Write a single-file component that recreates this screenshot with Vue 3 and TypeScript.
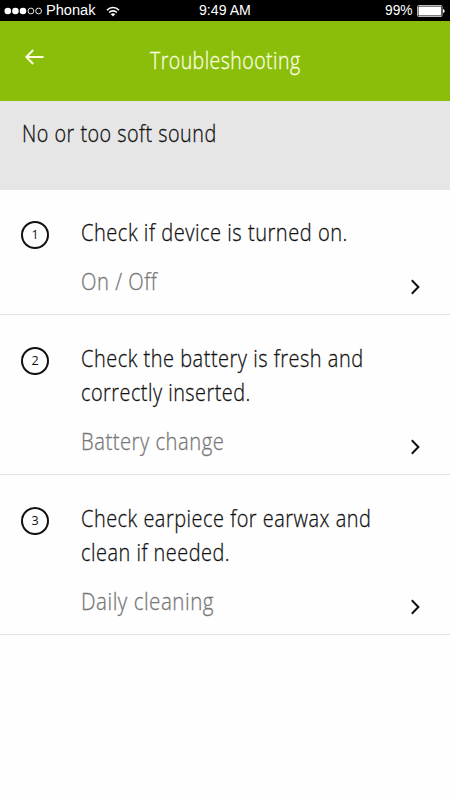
<script setup lang="ts">
import type { Directive } from 'vue'

interface Line { text: string; width: number }
interface Step { lines: Line[]; link: Line }

// Condenses a line of text to the given width in pixels.
const vFit: Directive<HTMLElement, number> = {
  mounted(el, binding) {
    el.style.transform = `scaleX(${binding.value / el.offsetWidth})`
  },
}

const steps: Step[] = [
  {
    lines: [{ text: 'Check if device is turned on.', width: 266.5 }],
    link: { text: 'On / Off', width: 76.5 },
  },
  {
    lines: [
      { text: 'Check the battery is fresh and', width: 283 },
      { text: 'correctly inserted.', width: 169.5 },
    ],
    link: { text: 'Battery change', width: 143.5 },
  },
  {
    lines: [
      { text: 'Check earpiece for earwax and', width: 290 },
      { text: 'clean if needed.', width: 149 },
    ],
    link: { text: 'Daily cleaning', width: 133 },
  },
]
</script>

<template>
  <main class="screen">
    <div class="status">
      <div class="carrier">
        <svg class="signal" width="38" height="8" viewBox="0 0 38 8">
          <circle cx="3.8" cy="4" r="3.3" fill="#fff" />
          <circle cx="11.4" cy="4" r="3.3" fill="#fff" />
          <circle cx="19" cy="4" r="3.3" fill="#fff" />
          <circle cx="26.9" cy="4" r="2.9" fill="none" stroke="#fff" stroke-width=".9" />
          <circle cx="34.6" cy="4" r="2.9" fill="none" stroke="#fff" stroke-width=".9" />
        </svg>
        <span v-fit="49" class="status-text">Phonak</span>
      </div>
      <svg class="wifi" width="14" height="11" viewBox="0 0 14 11">
        <path d="M1 4.2C4.4.6 9.6.6 13 4.2" fill="none" stroke="#fff" stroke-width="1.6" />
        <path d="M3.1 6.5C5.3 4.3 8.7 4.3 10.9 6.5" fill="none" stroke="#fff" stroke-width="1.6" />
        <path d="M4.7 8.1C6 6.9 8 6.9 9.3 8.1L7 10.5Z" fill="#fff" />
      </svg>
      <span v-fit="51.5" class="status-text clock">9:49 AM</span>
      <span v-fit="27.5" class="status-text percent">99%</span>
      <svg class="battery" width="28" height="12" viewBox="0 0 28 12">
        <rect x=".5" y=".5" width="24.5" height="11" rx="1" fill="none" stroke="#bbb" />
        <rect x="1.5" y="1.5" width="22.5" height="9" fill="#fff" />
        <path d="M26 4Q27.7 4.5 27.7 6T26 8Z" fill="#fff" />
      </svg>
    </div>

    <header class="bar">
      <svg class="back" width="20" height="16" viewBox="0 0 20 16" fill="none" stroke="#fbffe0" stroke-width="2">
        <path d="M9.2 1L2.3 8L9.2 15M2.6 8H19.6" />
      </svg>
      <h1 v-fit="150.5" class="copy title">Troubleshooting</h1>
    </header>

    <section class="topic">
      <h2 v-fit="195" class="copy">No or too soft sound</h2>
    </section>

    <ol class="steps">
      <li v-for="(step, i) in steps" :key="i" class="step">
        <span class="badge">{{ i + 1 }}</span>
        <div class="body">
          <div v-for="line in step.lines" :key="line.text" class="line">
            <span v-fit="line.width" class="copy">{{ line.text }}</span>
          </div>
          <div class="line link">
            <span v-fit="step.link.width" class="copy">{{ step.link.text }}</span>
          </div>
        </div>
        <svg class="chevron" width="10" height="16" viewBox="0 0 10 16" fill="none" stroke="#111" stroke-width="2">
          <path d="M1.8 1.2L8.4 8L1.8 14.8" />
        </svg>
      </li>
    </ol>
  </main>
</template>

<style>
body { margin: 0; background: #fefefe; }
</style>

<style scoped>
.screen {
  width: 450px;
  height: 800px;
  overflow: hidden;
  background: #fefefe;
  color: #111;
  font-family: "Open Sans", "Noto Sans", sans-serif;
}
.status {
  display: flex;
  align-items: center;
  box-sizing: border-box;
  height: 21px;
  padding-left: 4px;
  background: #000;
  color: #fff;
  font: 14px/21px "Liberation Sans", sans-serif;
}
.status-text { display: block; white-space: nowrap; transform-origin: left center; }
.carrier { display: flex; align-items: center; gap: 4px; width: 102px; }
.signal { flex: none; }
.wifi { flex: none; margin-top: 1px; }
.clock { width: max-content; margin-left: 78.5px; }
.percent { margin-left: auto; width: max-content; margin-right: 4px; }
.battery { flex: none; margin-right: 5px; }

.copy {
  display: inline-block;
  margin: 0;
  white-space: nowrap;
  font-size: 23.5px;
  font-weight: 300;
  line-height: 34px;
  letter-spacing: .6px;
  -webkit-text-stroke: .3px;
  transform-origin: left center;
}
.bar {
  display: flex;
  box-sizing: border-box;
  height: 80px;
  padding: 22px 0 0 24px;
  background: #8bbd0b;
  color: #fbffe0;
}
.back { flex: none; margin-top: 6px; }
.title { margin-left: 106px; }
.topic {
  box-sizing: border-box;
  height: 88.5px;
  padding: 15px 0 0 22px;
  background: #e6e6e6;
}
.steps { margin: 0; padding: 0; list-style: none; }
.step {
  display: flex;
  box-sizing: border-box;
  padding: 25.5px 30px 16.3px 21px;
  border-bottom: 1px solid #e2e2e2;
}
.badge {
  flex: none;
  box-sizing: border-box;
  width: 28px;
  height: 28px;
  margin-top: 6px;
  border: 2px solid #111;
  border-radius: 50%;
  font-size: 12.5px;
  line-height: 24px;
  text-align: center;
}
.body { flex: 1; min-width: 0; margin-left: 32px; }
.line { height: 34px; }
.link { margin-top: 15px; color: #777; }
.chevron { flex: none; align-self: flex-end; margin-bottom: 3px; }
</style>
